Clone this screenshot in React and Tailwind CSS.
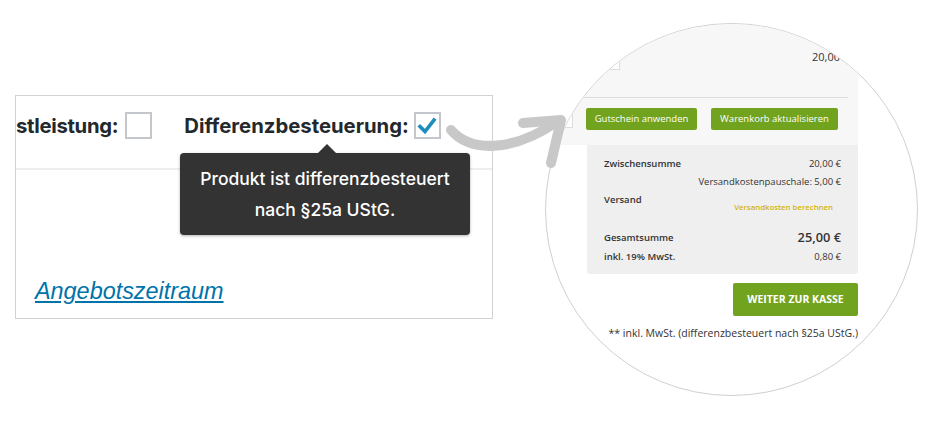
import React from 'react';

const sans = { fontFamily: '"Liberation Sans", Arial, sans-serif' };
const inter = { fontFamily: 'Inter, "Liberation Sans", sans-serif' };
const open = { fontFamily: '"Open Sans", "Liberation Sans", sans-serif' };

const Checkbox = ({ checked }) => (
  <div className="w-[27px] h-[27px] border-2 border-[#c3c7cb] bg-white flex items-center justify-center shrink-0">
    {checked && (
      <svg width="22" height="22" viewBox="0 0 22 22">
        <path d="M4 11.5 L9 16.5 L18 5" fill="none" stroke="#1e8cbe" strokeWidth="3.6" strokeLinecap="square" />
      </svg>
    )}
  </div>
);

const Tooltip = () => (
  <div className="absolute left-[164px] top-[48px] flex flex-col items-center">
    <div className="w-0 h-0 border-x-[9px] border-x-transparent border-b-[9px] border-b-[#333] ml-[4px]" />
    <div
      className="w-[290px] h-[82px] bg-[#333] rounded-[4px] shadow-[0_1px_3px_rgba(0,0,0,0.3)] flex flex-col items-center justify-center text-white text-[17.5px] leading-[31px] font-medium"
      style={inter}
    >
      <span>Produkt ist differenzbesteuert</span>
      <span>nach §25a UStG.</span>
    </div>
  </div>
);

const LeftPanel = () => (
  <div className="relative ml-[15px] mt-[95px] w-[478px] h-[224px] border border-[#d2d2d2] bg-white shrink-0">
    <div className="h-[74px] border-b-2 border-[#eeeeee] overflow-hidden flex items-start pt-[16px] text-[#23282d] font-bold text-[20.3px]" style={inter}>
      <span className="leading-[27px] whitespace-nowrap tracking-[-0.3px]">stleistung:</span>
      <div className="ml-[7px]"><Checkbox /></div>
      <span className="ml-[32px] leading-[27px] whitespace-nowrap">Differenzbesteuerung:</span>
      <div className="ml-[5px]"><Checkbox checked /></div>
    </div>
    <div className="pl-[19px] pt-[107px]">
      <a href="#" className="italic underline text-[#0073aa] text-[23.4px] leading-[28px]" style={sans}>
        Angebotszeitraum
      </a>
    </div>
    <Tooltip />
  </div>
);

const Row = ({ label, value, className = '' }) => (
  <div className={`flex justify-between items-center h-[18px] ${className}`}>
    <span className="font-semibold">{label}</span>
    <span>{value}</span>
  </div>
);

const Circle = () => (
  <div className="ml-[52px] mt-[23px] w-[373px] h-[373px] rounded-full border border-[#d0d0d0] overflow-hidden bg-white shrink-0 flex flex-col text-[#333]" style={open}>
    <div className="w-[312px] h-[121px] bg-[#f7f7f7] flex flex-col shrink-0">
      <div className="h-[73px] flex items-start">
        <div className="w-[74px] h-[46px] bg-white border-r border-b border-[#dcdcdc] shrink-0" />
        <span className="ml-[192px] mt-[26px] text-[11px] leading-[14px] whitespace-nowrap">20,00 €</span>
      </div>
      <div className="ml-[37px] w-[265px] border-t border-[#dcdcdc]" />
      <div className="flex items-start">
        <div className="w-[27px] h-[30px] bg-white border-r border-b border-[#dcdcdc] shrink-0" />
        <button className="ml-[13px] mt-[10px] w-[111px] h-[22px] rounded-[2px] bg-[#71a31e] text-white text-[9.5px] leading-[22px] text-center">
          Gutschein anwenden
        </button>
        <button className="ml-[14px] mt-[10px] w-[127px] h-[22px] rounded-[2px] bg-[#71a31e] text-white text-[9.5px] leading-[22px] text-center">
          Warenkorb aktualisieren
        </button>
      </div>
    </div>
    <div className="ml-[41px] w-[271px] h-[129px] bg-[#efefef] rounded-b-[3px] px-[17px] pt-[10px] text-[9.5px] shrink-0">
      <Row label="Zwischensumme" value="20,00 €" />
      <div className="flex justify-end h-[18px] items-center">Versandkostenpauschale: 5,00 €</div>
      <div className="flex justify-between items-start h-[38px]">
        <span className="font-semibold leading-[18px]">Versand</span>
        <span className="mt-[9px] mr-[8px] text-[7.8px] leading-[14px] font-semibold text-[#d3b50a]">Versandkosten berechnen</span>
      </div>
      <div className="flex justify-between items-center h-[18px]">
        <span className="font-semibold">Gesamtsumme</span>
        <span className="text-[12.8px] font-semibold">25,00 €</span>
      </div>
      <Row label="inkl. 19% MwSt." value="0,80 €" className="mt-[1px]" />
    </div>
    <div className="w-[312px] flex flex-col items-end shrink-0">
      <button className="mt-[9px] w-[125px] h-[33px] rounded-[2px] bg-[#71a31e] text-white font-bold text-[10.5px] uppercase">
        Weiter zur Kasse
      </button>
      <span className="mt-[10px] text-[10.5px] leading-[14px] whitespace-nowrap">** inkl. MwSt. (differenzbesteuert nach §25a UStG.)</span>
    </div>
  </div>
);

const Arrow = () => (
  <svg className="absolute left-[440px] top-[95px]" width="135" height="80" viewBox="0 0 135 80">
    <g fill="none" stroke="#c8c8c8" strokeWidth="10" strokeLinecap="round" strokeLinejoin="round">
      <path d="M11 35 C30 57, 72 58, 118 26" />
      <path d="M83 28 L121 25 L111 68" />
    </g>
  </svg>
);

export default function App() {
  return (
    <div className="relative w-[945px] h-[426px] bg-white flex items-start overflow-hidden">
      <LeftPanel />
      <Circle />
      <Arrow />
    </div>
  );
}
